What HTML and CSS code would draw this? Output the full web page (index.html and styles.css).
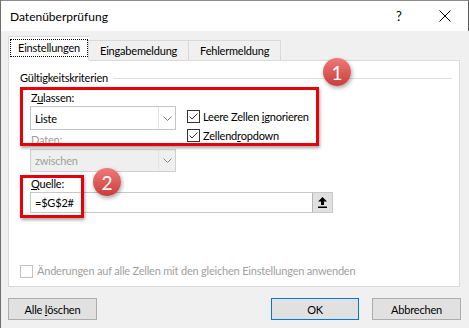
FILE: index.html
```html
<!DOCTYPE html>
<html>
    <head>
        <meta charset="UTF-8" />
        <title>Datenüberprüfung</title>
        <link rel="stylesheet" href="styles.css">
    </head>
    <body>
    <div class="dialog">
        <div class="titlebar">
            <span class="title">Datenüberprüfung</span>
            <span class="title-btn">?</span>
            <span class="title-btn">
                <svg width="12" height="12" viewBox="0 0 12 12"><path d="M0.5 0.5 L11.5 11.5 M11.5 0.5 L0.5 11.5" stroke="#000" stroke-width="1" fill="none"/></svg>
            </span>
        </div>

        <div class="main">
            <div class="tabs">
                <div class="tab active"><span class="focus">Einstellungen</span></div>
                <div class="tab">Eingabemeldung</div>
                <div class="tab">Fehlermeldung</div>
            </div>

            <div class="panel">
                <div class="group-head">Gültigkeitskriterien<span class="rule"></span></div>

                <div class="fields">
                    <div class="row">
                        <div class="col">
                            <div class="label">Z<u>u</u>lassen:</div>
                            <div class="select select-main">
                                <span class="select-text">Liste</span>
                                <span class="select-arrow">
                                    <svg width="9" height="5" viewBox="0 0 9 5"><path d="M0.5 0.5 L4.5 4.5 L8.5 0.5" stroke="#7a7a7a" fill="none"/></svg>
                                </span>
                            </div>
                        </div>
                        <div class="checks">
                            <div class="check-row">
                                <span class="box">
                                    <svg width="11" height="11" viewBox="0 0 11 11"><path d="M1.5 5.5 L4 8 L9.5 2.5" stroke="#333" fill="none"/></svg>
                                </span>
                                <span>Leere Zellen <u>i</u>gnorieren</span>
                            </div>
                            <div class="check-row">
                                <span class="box">
                                    <svg width="11" height="11" viewBox="0 0 11 11"><path d="M1.5 5.5 L4 8 L9.5 2.5" stroke="#333" fill="none"/></svg>
                                </span>
                                <span>Zellend<u>r</u>opdown</span>
                            </div>
                        </div>
                    </div>

                    <div class="label label-daten disabled">Daten:</div>
                    <div class="select select-off">
                        <span class="select-text">zwischen</span>
                        <span class="select-arrow">
                            <svg width="9" height="5" viewBox="0 0 9 5"><path d="M0.5 0.5 L4.5 4.5 L8.5 0.5" stroke="#8a8a8a" fill="none"/></svg>
                        </span>
                    </div>

                    <div class="label label-quelle"><u>Q</u>uelle:</div>
                    <div class="source">
                        <span class="source-text">=$G$2#</span>
                        <span class="pick">
                            <svg width="9" height="11" viewBox="0 0 9 11"><path d="M4.5 0 L9 4.5 L6 4.5 L6 8 L3 8 L3 4.5 L0 4.5 Z" fill="#000"/><rect x="0" y="9.5" width="9" height="1.5" fill="#000"/></svg>
                        </span>
                    </div>
                </div>

                <div class="apply-row disabled">
                    <span class="box box-off"></span>
                    <span>Änderungen auf alle Zellen mit den gleichen Einstellungen anwenden</span>
                </div>
            </div>

            <div class="buttons">
                <button>Alle <u>l</u>öschen</button>
                <button class="default">OK</button>
                <button class="cancel">Abbrechen</button>
            </div>
        </div>

        <!-- annotations on top of the screenshot -->
        <div class="mark mark-1"></div>
        <div class="mark mark-2"></div>
        <div class="badge badge-1">1</div>
        <div class="badge badge-2">2</div>
    </div>
    </body>
</html>
```

FILE: styles.css
```css
body {
    margin: 0;
    font-family: Lato, "Noto Sans", sans-serif;
    font-size: 11px;
    letter-spacing: -0.2px;
    color: #000;
    background: #f0f0f0;
}
.dialog {
    position: relative;
    width: 469px;
    height: 328px;
    box-sizing: border-box;
    border-left: 1px solid #6e6e6e;
    background: #f0f0f0;
    overflow: hidden;
}
.titlebar {
    height: 31px;
    box-sizing: border-box;
    display: flex;
    align-items: center;
    background: #fff;
    border-top: 1px solid #8c8c8c;
    border-right: 1px solid #5a5a5a;
    padding-left: 9px;
    font-size: 12px;
    letter-spacing: 0;
}
.title {
    flex: 1;
}
.title-btn {
    width: 46px;
    height: 30px;
    display: flex;
    align-items: center;
    justify-content: center;
    font-size: 13px;
}
.main {
    padding: 5px 8px 0 7px;
}

/* tabs */
.tabs {
    display: flex;
    align-items: flex-start;
    height: 25px;
    margin-bottom: -1px;
    position: relative;
    z-index: 1;
}
.tab {
    height: 20px;
    margin-top: 4px;
    box-sizing: border-box;
    padding: 0 11px;
    display: flex;
    align-items: center;
    border: 1px solid #d9d9d9;
    border-bottom: none;
    background: #f0f0f0;
    margin-left: -1px;
}
.tab.active {
    height: 25px;
    margin-top: 0;
    margin-left: 0;
    padding: 0 2px 2px 2px;
    background: #fff;
    border-right: none;
}
.focus {
    outline: 1px dotted #000;
    padding: 0 7px;
    line-height: 16px;
}

/* settings panel */
.panel {
    height: 227px;
    box-sizing: border-box;
    margin-right: 1px;
    padding: 9px 7px 7px 11px;
    background: #fff;
    border: 1px solid #d9d9d9;
    display: flex;
    flex-direction: column;
}
.group-head {
    display: flex;
    align-items: center;
    gap: 5px;
    line-height: 16px;
}
.rule {
    flex: 1;
    height: 1px;
    background: #dcdcdc;
}
.fields {
    margin-left: 10px;
}
.row {
    display: flex;
    align-items: flex-start;
    gap: 11px;
    margin-top: 4px;
}
.label {
    line-height: 16px;
    padding-left: 1px;
}
.label-daten {
    margin-top: 2px;
}
.label-quelle {
    margin-top: 4px;
}
.disabled {
    color: #a0a0a0;
}
.select {
    width: 146px;
    height: 24px;
    box-sizing: border-box;
    display: flex;
    border: 1px solid #c4c4c4;
    background: #fff;
}
.select-off {
    height: 23px;
    margin-top: 1px;
    background: #efefef;
    border-color: #cfcfcf;
    color: #a0a0a0;
}
.select-text {
    flex: 1;
    padding-left: 4px;
    display: flex;
    align-items: center;
}
.select-arrow {
    width: 16px;
    display: flex;
    align-items: center;
    justify-content: center;
    border-left: 1px solid #e3e3e3;
}
.checks {
    margin-top: 17px;
    margin-bottom: -15px;
}
.check-row {
    height: 19px;
    display: flex;
    align-items: center;
    gap: 3px;
}
.box {
    width: 13px;
    height: 13px;
    box-sizing: border-box;
    border: 1px solid #333;
    background: #fff;
    display: flex;
    align-items: center;
    justify-content: center;
}
.box-off {
    border-color: #c2c2c2;
}
.source {
    width: 303px;
    height: 21px;
    box-sizing: border-box;
    display: flex;
    border: 1px solid #c8c8c8;
}
.source-text {
    flex: 1;
    padding-left: 4px;
    display: flex;
    align-items: center;
}
.pick {
    width: 19px;
    display: flex;
    align-items: center;
    justify-content: center;
    background: #e1e1e1;
    border-left: 1px solid #b5b5b5;
}
.apply-row {
    margin-top: auto;
    display: flex;
    align-items: center;
    gap: 4px;
    line-height: 16px;
}

/* bottom buttons */
.buttons {
    display: flex;
    margin-top: 11px;
}
button {
    width: 89px;
    height: 22px;
    padding: 0;
    font-family: inherit;
    font-size: 11px;
    letter-spacing: -0.2px;
    color: #000;
    background: #e1e1e1;
    border: 1px solid #adadad;
}
button.default {
    width: 88px;
    margin-left: auto;
    border-color: #0078d7;
}
button.cancel {
    margin-left: 13px;
}

/* red annotations */
.mark {
    position: absolute;
    box-sizing: border-box;
    border: 3px solid #e6000a;
    box-shadow: 1px 2px 3px rgba(0, 0, 0, 0.35);
}
.mark-1 {
    left: 19px;
    top: 87px;
    width: 299px;
    height: 59px;
}
.mark-2 {
    left: 19px;
    top: 175px;
    width: 64px;
    height: 43px;
}
.badge {
    position: absolute;
    width: 28px;
    height: 28px;
    border-radius: 50%;
    background: linear-gradient(#ec7b79, #cc3c3a);
    color: #fff;
    font-size: 19px;
    letter-spacing: 0;
    display: flex;
    align-items: center;
    justify-content: center;
    box-shadow: 1px 2px 4px rgba(0, 0, 0, 0.35);
}
.badge-1 {
    left: 322px;
    top: 58px;
}
.badge-2 {
    left: 92px;
    top: 168px;
}
```
